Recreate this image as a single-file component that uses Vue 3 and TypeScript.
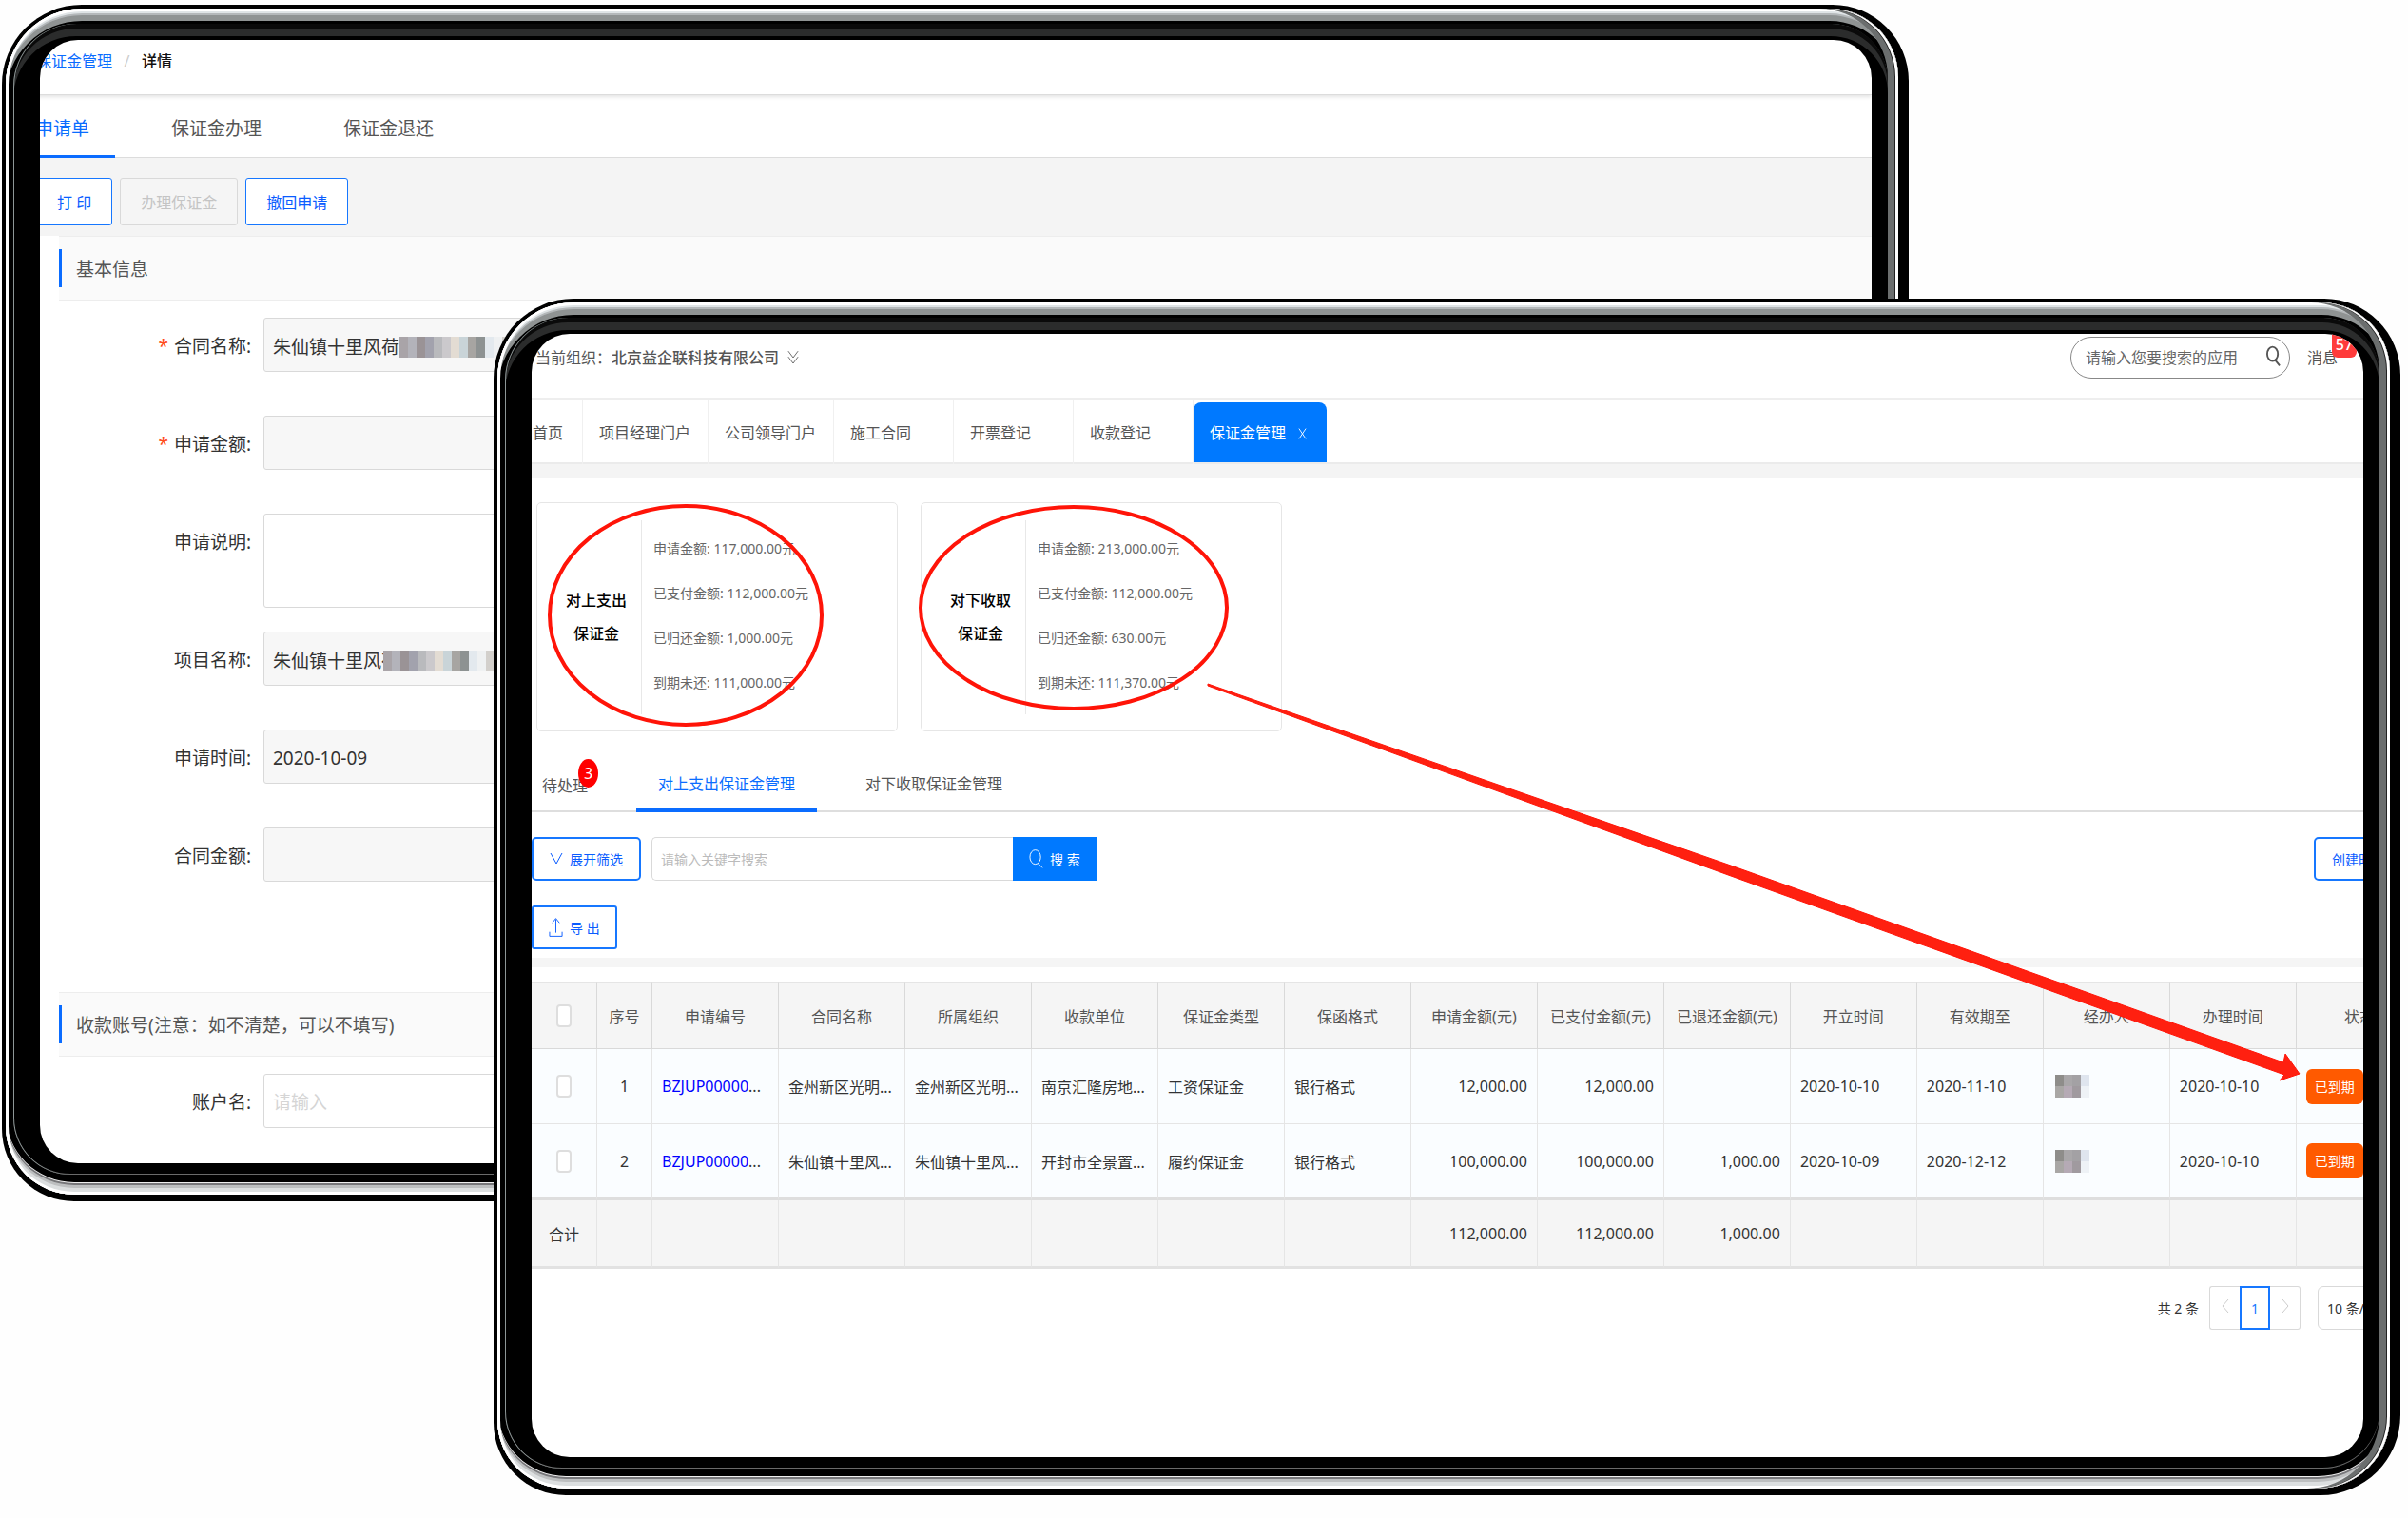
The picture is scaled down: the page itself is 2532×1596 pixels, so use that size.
<script setup lang="ts">
interface Field {
  id: string
  label: string
  value: string
  required?: boolean
  multiline?: boolean
  mask?: 'wide' | 'early'
}

interface Row {
  no: number
  code: string
  contract: string
  org: string
  payee: string
  kind: string
  format: string
  amount: string
  paid: string
  returned: string
  opened: string
  until: string
  handled: string
}

const fields: Field[] = [
  { id: 'contract-name', label: '合同名称', value: '朱仙镇十里风荷', required: true, mask: 'wide' },
  { id: 'apply-amount', label: '申请金额', value: '', required: true },
  { id: 'apply-note', label: '申请说明', value: '', multiline: true },
  { id: 'project-name', label: '项目名称', value: '朱仙镇十里风荷', mask: 'early' },
  { id: 'apply-date', label: '申请时间', value: '2020-10-09' },
  { id: 'contract-amount', label: '合同金额', value: '' },
]

const maskCells: string[] = [
  '#a9a4a8', '#b3b3ba', '#9a9396', '#a2a2ad', '#b9babd', '#cbc9cc', '#e3dcd3', '#c9d4d8',
  '#a7a5a2', '#8d9292', '#e3e9ee', '#eff1f2', '#d3d0cc', '#aab4ba',
]
const personCells: string[] = ['#8e8d8a', '#a9a7a9', '#a3a1a4', '#dfe5ee', '#a9a7a5', '#b5aab5', '#a09a9f', '#eef2f6']

const navTabs: string[] = ['项目经理门户', '公司领导门户', '施工合同', '开票登记', '收款登记']

const cards = [
  {
    title: ['对上支出', '保证金'],
    lines: ['申请金额: 117,000.00元', '已支付金额: 112,000.00元', '已归还金额: 1,000.00元', '到期未还: 111,000.00元'],
  },
  {
    title: ['对下收取', '保证金'],
    lines: ['申请金额: 213,000.00元', '已支付金额: 112,000.00元', '已归还金额: 630.00元', '到期未还: 111,370.00元'],
  },
]

const columns: string[] = [
  '申请编号', '合同名称', '所属组织', '收款单位', '保证金类型', '保函格式', '申请金额(元)',
  '已支付金额(元)', '已退还金额(元)', '开立时间', '有效期至', '经办人', '办理时间', '状态',
]

const rows: Row[] = [
  {
    no: 1, code: 'BZJUP00000', contract: '金州新区光明...', org: '金州新区光明...', payee: '南京汇隆房地...',
    kind: '工资保证金', format: '银行格式', amount: '12,000.00', paid: '12,000.00', returned: '',
    opened: '2020-10-10', until: '2020-11-10', handled: '2020-10-10',
  },
  {
    no: 2, code: 'BZJUP00000', contract: '朱仙镇十里风...', org: '朱仙镇十里风...', payee: '开封市全景置...',
    kind: '履约保证金', format: '银行格式', amount: '100,000.00', paid: '100,000.00', returned: '1,000.00',
    opened: '2020-10-09', until: '2020-12-12', handled: '2020-10-10',
  },
]
</script>

<template>
  <main class="stage">
    <section class="device back">
      <div class="screen">
        <nav class="crumbs">
          <a href="#">保证金管理</a><span class="slash">/</span><strong>详情</strong>
        </nav>
        <div class="form-tabs">
          <button type="button" class="on">申请单</button>
          <button type="button">保证金办理</button>
          <button type="button">保证金退还</button>
        </div>
        <div class="toolbar">
          <button type="button" class="line-btn">打 印</button>
          <button type="button" class="line-btn" disabled>办理保证金</button>
          <button type="button" class="line-btn">撤回申请</button>
        </div>
        <h2 class="group-title">基本信息</h2>
        <form class="fields">
          <div v-for="f in fields" :key="f.id" class="field" :class="{ multi: f.multiline }">
            <label :for="f.id"><i v-if="f.required">*</i>{{ f.label }}:</label>
            <textarea v-if="f.multiline" :id="f.id"></textarea>
            <div v-else class="box">
              <input :id="f.id" type="text" :value="f.value" readonly>
              <span v-if="f.mask" class="mask" :class="f.mask">
                <b v-for="(c, i) in maskCells" :key="i" :style="{ background: c }"></b>
              </span>
            </div>
          </div>
        </form>
        <h2 class="group-title second">收款账号(注意：如不清楚，可以不填写)</h2>
        <form class="fields">
          <div class="field">
            <label for="account">账户名:</label>
            <div class="box"><input id="account" class="open" type="text" placeholder="请输入"></div>
          </div>
        </form>
      </div>
    </section>

    <section class="device front">
      <div class="screen">
        <div class="workspace">
          <header class="top">
            <p>当前组织：<strong>北京益企联科技有限公司</strong></p>
            <svg class="more" viewBox="0 0 14 18" aria-hidden="true"><path d="M1 1l6 8 6-8M1 8l6 8 6-8" /></svg>
            <div class="app-search">
              <input type="text" aria-label="搜索应用" placeholder="请输入您要搜索的应用">
              <svg viewBox="0 0 16 22" aria-hidden="true"><ellipse cx="7" cy="9" rx="6" ry="8" /><path d="M10 16l5 6" /></svg>
            </div>
            <a href="#" class="msg">消息<span>57</span></a>
          </header>

          <nav class="nav-tabs">
            <a href="#" class="home">首页</a>
            <a v-for="t in navTabs" :key="t" href="#">{{ t }}</a>
            <a href="#" class="active">保证金管理
              <svg viewBox="0 0 10 14" aria-hidden="true"><path d="M1 1l8 12M9 1L1 13" /></svg>
            </a>
          </nav>

          <div class="cards">
            <article v-for="c in cards" :key="c.title[0]" class="card">
              <h3><span v-for="t in c.title" :key="t">{{ t }}</span></h3>
              <ul>
                <li v-for="l in c.lines" :key="l">{{ l }}</li>
              </ul>
            </article>
          </div>

          <div class="sub-tabs">
            <button type="button" class="todo">待处理<span>3</span></button>
            <button type="button" class="on">对上支出保证金管理</button>
            <button type="button">对下收取保证金管理</button>
          </div>

          <div class="filters">
            <button type="button" class="act">
              <svg viewBox="0 0 14 14" aria-hidden="true"><path d="M1 1l6 11 6-11" /></svg>展开筛选
            </button>
            <input type="text" aria-label="关键字" placeholder="请输入关键字搜索">
            <button type="button" class="find">
              <svg viewBox="0 0 16 22" aria-hidden="true"><ellipse cx="7" cy="9" rx="6" ry="8" /><path d="M10 16l5 5" /></svg>搜 索
            </button>
            <button type="button" class="act sort">创建时间</button>
          </div>
          <div class="export">
            <button type="button" class="act">
              <svg viewBox="0 0 16 22" aria-hidden="true"><path d="M8 17V2M4 6l4-5 4 5M1 16v5h14v-5" /></svg>导 出
            </button>
          </div>

          <table>
            <colgroup>
              <col class="c-check"><col class="c-no"><col v-for="c in columns" :key="c">
            </colgroup>
            <thead>
              <tr>
                <th><input type="checkbox" aria-label="全选"></th>
                <th>序号</th>
                <th v-for="c in columns" :key="c">{{ c }}</th>
              </tr>
            </thead>
            <tbody>
              <tr v-for="r in rows" :key="r.no">
                <td class="mid"><input type="checkbox" :aria-label="'选择' + r.no"></td>
                <td class="mid">{{ r.no }}</td>
                <td><a href="#">{{ r.code }}</a>...</td>
                <td>{{ r.contract }}</td>
                <td>{{ r.org }}</td>
                <td>{{ r.payee }}</td>
                <td>{{ r.kind }}</td>
                <td>{{ r.format }}</td>
                <td class="num">{{ r.amount }}</td>
                <td class="num">{{ r.paid }}</td>
                <td class="num">{{ r.returned }}</td>
                <td>{{ r.opened }}</td>
                <td>{{ r.until }}</td>
                <td><span class="person"><b v-for="(c, i) in personCells" :key="i" :style="{ background: c }"></b></span></td>
                <td>{{ r.handled }}</td>
                <td><span class="tag">已到期</span></td>
              </tr>
            </tbody>
            <tfoot>
              <tr>
                <td class="mid">合计</td>
                <td v-for="n in 7" :key="n"></td>
                <td class="num">112,000.00</td>
                <td class="num">112,000.00</td>
                <td class="num">1,000.00</td>
                <td v-for="n in 5" :key="n"></td>
              </tr>
            </tfoot>
          </table>

          <div class="pager">
            <span>共 2 条</span>
            <div class="pages">
              <button type="button" aria-label="上一页"><svg viewBox="0 0 8 16"><path d="M7 1L1 8l6 7" /></svg></button>
              <button type="button" class="current">1</button>
              <button type="button" aria-label="下一页"><svg viewBox="0 0 8 16"><path d="M1 1l6 7-6 7" /></svg></button>
            </div>
            <select aria-label="每页条数"><option>10 条/页</option></select>
          </div>
        </div>

        <svg class="marks" aria-hidden="true">
          <ellipse cx="162" cy="296" rx="143" ry="115" />
          <ellipse cx="570" cy="288" rx="161" ry="106" />
          <polygon points="711,368 1261,559 1842,766 1844,757 1859,778 1838,785 1843,779 1261,570 711,370" />
        </svg>
      </div>
    </section>
  </main>
</template>

<style>
body {
  margin: 0;
  background: #fefefe;
}
</style>

<style scoped>
* {
  box-sizing: border-box;
}

.stage {
  display: grid;
  padding: 5px 8px 20px 2px;
  font-family: "Noto Sans", "Noto Sans CJK SC", sans-serif;
  font-size: 16px;
  color: #333;
  overflow: hidden;
}

button,
input,
select,
textarea {
  font: inherit;
  color: inherit;
  margin: 0;
}

button {
  background: none;
  border: 0;
  padding: 0;
  white-space: nowrap;
}

a {
  color: inherit;
  text-decoration: none;
}

svg {
  fill: none;
  stroke: currentColor;
}

/* tablet shells */
.device {
  grid-area: 1 / 1;
  position: relative;
  isolation: isolate;
  align-self: start;
  display: flex;
  width: 79.5%;
  aspect-ratio: 2005 / 1258;
  padding: 37px 39px 40px 40px;
  border-radius: 84px 80px 84px 76px;
  background: #000;
}

.front {
  justify-self: end;
  margin-top: 309px;
}

.device::before,
.device::after {
  content: "";
  position: absolute;
}

.device::before {
  inset: 4px 11px 7px 4px;
  border-radius: 80px 72px 76px 72px;
  background: #000;
  box-shadow:
    inset 3px 0 0 #fff,
    inset -3px 0 0 #fff,
    inset -4px 0 0 #222,
    inset -11px 0 0 #6b6e6e,
    inset 0 3px 0 #fff,
    inset 0 5px 0 #dfe4e6,
    inset 0 7px 0 #b4b8ba,
    inset 0 13px 0 #8f9393,
    inset 0 -3px 0 #fff,
    inset 0 -7px 0 #dcdfe0,
    inset 0 -10px 0 #bdbfc0,
    inset 0 -12px 0 #77777a,
    inset 0 -13px 0 #eee;
}

.device::after {
  inset: 20px 22px 28px 12px;
  border-radius: 66px 60px 60px 60px;
  background: #000;
  box-shadow:
    inset 1px 0 0 #8d9696,
    inset 0 -1px 0 #6a6a6a,
    inset 0 5px 0 #0a0a0a,
    inset 0 13px 0 #2b2c2c;
}

.screen {
  position: relative;
  z-index: 1;
  flex: 1;
  min-width: 0;
  overflow: hidden;
  border-radius: 40px;
  background: #fff;
}

/* application form */
.crumbs {
  display: flex;
  height: 58px;
  padding-top: 11px;
  margin-left: -4px;
  line-height: 22px;
  border-bottom: 1px solid #dcdcdc;
  box-shadow: 0 2px 4px #e4e4e4;
}

.crumbs a,
.form-tabs .on {
  color: #0a6cff;
}

.crumbs .slash {
  width: 31px;
  text-align: center;
  color: #ccc;
}

.crumbs strong {
  font-weight: 500;
  color: #111;
}

.form-tabs {
  display: flex;
  gap: 32px;
  height: 66px;
  border-bottom: 1px solid #dcdcdc;
}

.form-tabs button {
  height: 66px;
  padding: 1px 27px 0;
  font-size: 19px;
  color: #555;
}

.form-tabs button:first-child {
  margin-left: -32px;
}

.form-tabs .on {
  padding-top: 4px;
  border-bottom: 3px solid #0a6cff;
}

.toolbar {
  display: flex;
  gap: 8px;
  height: 82px;
  padding-top: 21px;
  background: #f4f4f4;
}

.line-btn {
  height: 50px;
  padding: 0 21px;
  border: 1px solid #1677ff;
  border-radius: 3px;
  background: #fff;
  color: #0a5cff;
}

.line-btn:first-child {
  margin-left: -4px;
}

.line-btn:disabled {
  background: #f5f5f5;
  border-color: #d9d9d9;
  color: #c4c4c4;
}

.group-title {
  display: flex;
  align-items: center;
  height: 68px;
  margin: 0 0 18px 20px;
  border: solid #ededed;
  border-width: 1px 0;
  background: #fafafa;
  font-size: 19px;
  font-weight: 400;
  color: #555;
}

.group-title::before {
  content: "";
  width: 3px;
  height: 40px;
  margin-right: 15px;
  background: #0a6cff;
}

.second {
  margin-top: 116px;
}

.fields {
  display: flex;
  flex-direction: column;
  gap: 46px;
  font-size: 19px;
}

.field {
  display: flex;
  gap: 13px;
}

.field label {
  width: 222px;
  line-height: 60px;
  height: 57px;
  text-align: right;
}

.field i {
  margin-right: 6px;
  font-style: normal;
  color: #ff4a1c;
}

.box {
  position: relative;
  width: 640px;
}

.box input,
.field textarea {
  width: 100%;
  height: 57px;
  padding: 2px 9px 0;
  border: 1px solid #d9d9d9;
  border-radius: 3px;
  background: #f7f7f7;
  outline: 0;
}

.field textarea {
  display: block;
  width: 640px;
  height: 99px;
  background: #fff;
  resize: none;
}

.multi {
  margin-bottom: -21px;
}

.box .open {
  background: #fff;
}

.box .open::placeholder {
  color: #d5d5d5;
  opacity: 1;
}

.mask {
  position: absolute;
  top: 20px;
  left: 143px;
  display: flex;
  height: 22px;
}

.early {
  left: 126px;
}

.mask b {
  width: 9px;
}

/* deposit workspace */
.workspace {
  margin-right: -63px;
}

.top {
  display: flex;
  height: 70px;
  padding: 3px 90px 0 4px;
  border-bottom: 3px solid #eee;
  line-height: 44px;
  color: #555;
}

.top p {
  margin: 0;
}

.top strong {
  font-weight: 500;
}

.more {
  width: 12px;
  height: 18px;
  margin: 13px 0 0 9px;
}

.app-search {
  display: flex;
  align-items: center;
  width: 231px;
  height: 44px;
  margin-left: auto;
  padding: 0 9px 0 15px;
  border: 1px solid #888;
  border-radius: 22px;
}

.app-search input {
  flex: 1;
  min-width: 0;
  padding: 0;
  border: 0;
  outline: 0;
  background: none;
}

.app-search input::placeholder {
  color: #666;
  opacity: 1;
}

.app-search svg {
  width: 15px;
  height: 22px;
  margin-top: -4px;
  stroke-width: 2;
}

.msg {
  position: relative;
  margin-left: 18px;
}

.msg span {
  position: absolute;
  top: -8px;
  left: 26px;
  width: 26px;
  height: 30px;
  border-radius: 6px;
  background: #ff3b3b;
  color: #fff;
  font-weight: 500;
  line-height: 32px;
  text-align: center;
}

.nav-tabs {
  display: flex;
  height: 82px;
  border-bottom: 15px solid #f4f4f4;
  box-shadow: inset 0 -2px 0 #ebebeb;
  line-height: 68px;
  color: #555;
}

.nav-tabs a {
  min-width: 126px;
  padding: 0 18px 0 17px;
  border-right: 1px solid #f0f0f0;
}

.nav-tabs .home {
  min-width: 0;
  padding: 0 20px 0 1px;
}

.nav-tabs .active {
  width: 140px;
  height: 63px;
  margin-top: 2px;
  border: 0;
  border-radius: 8px 8px 0 0;
  background: #0079ff;
  color: #fff;
  line-height: 64px;
  white-space: nowrap;
}

.nav-tabs svg {
  width: 9px;
  height: 14px;
  margin-left: 9px;
  vertical-align: -2px;
}

.cards {
  display: flex;
  gap: 24px;
  padding: 25px 5px 0;
}

.card {
  display: flex;
  align-items: center;
  width: 380px;
  height: 241px;
  border: 1px solid #e6e6e6;
  border-radius: 5px;
}

.card h3 {
  display: flex;
  flex-direction: column;
  justify-content: center;
  width: 110px;
  height: 204px;
  margin: 0;
  padding-left: 15px;
  border-right: 1px solid #e8e8e8;
  font-size: 16px;
  font-weight: 500;
  line-height: 35px;
  text-align: center;
  color: #000;
}

.card ul {
  margin: 0;
  padding: 0 0 4px 12px;
  list-style: none;
  font-size: 14px;
  line-height: 47px;
  color: #666;
}

.sub-tabs {
  display: flex;
  gap: 28px;
  height: 56px;
  margin-top: 29px;
  border-bottom: 2px solid #dedede;
}

.sub-tabs button {
  position: relative;
  height: 56px;
  padding: 0 23px 6px;
  color: #555;
}

.sub-tabs .todo {
  padding: 0 23px 2px 11px;
}

.sub-tabs .todo span {
  position: absolute;
  top: 0;
  left: 49px;
  width: 21px;
  height: 30px;
  border-radius: 50%;
  background: #f00;
  color: #fff;
  line-height: 30px;
}

.sub-tabs .on {
  color: #0a6cff;
  box-shadow: inset 0 -4px 0 #0a6cff;
}

.filters {
  display: flex;
  margin-top: 26px;
  font-size: 14px;
}

.act,
.find {
  display: flex;
  align-items: center;
  gap: 7px;
  height: 46px;
  padding: 0 17px;
  border: 2px solid #1677ff;
  border-radius: 5px;
  color: #0a5cff;
}

.act svg {
  width: 14px;
  height: 14px;
}

.filters input {
  width: 380px;
  height: 46px;
  margin-left: 11px;
  padding: 0 9px;
  border: 1px solid #d9d9d9;
  border-right: 0;
  border-radius: 5px 0 0 5px;
  outline: 0;
}

.filters input::placeholder {
  color: #bbb;
  opacity: 1;
}

.find {
  width: 89px;
  border: 0;
  border-radius: 0;
  background: #0079ff;
  color: #fff;
}

.find svg,
.export svg {
  width: 15px;
  height: 22px;
}

.sort {
  width: 115px;
  margin-left: auto;
}

.export {
  height: 91px;
  padding-top: 26px;
  border-bottom: 10px solid #f5f5f5;
  font-size: 14px;
}

.export .act {
  padding: 0 16px;
  border-radius: 3px;
}

table {
  width: 100%;
  margin-top: 15px;
  table-layout: fixed;
  border-collapse: separate;
  border-spacing: 0;
  white-space: nowrap;
}

.c-check {
  width: 69px;
}

.c-no {
  width: 58px;
}

th,
td {
  height: 79px;
  padding: 0 10px;
  border: solid #e5e5e5;
  border-width: 0 1px 1px 0;
  background: #fafdff;
  text-align: left;
}

th {
  height: 71px;
  padding: 0;
  border-color: #d9d9d9;
  border-top: 1px solid #e5e5e5;
  background: #f5f5f5;
  color: #555;
  font-weight: 400;
  text-align: center;
}

tbody tr:last-child td {
  height: 80px;
  border-bottom: 3px solid #dedede;
}

tfoot td {
  height: 72px;
  border-bottom: 3px solid #e2e2e2;
  background: #f5f5f5;
}

td a {
  color: #00f;
}

td.mid {
  padding: 0;
  text-align: center;
}

td.num {
  text-align: right;
}

table input {
  appearance: none;
  width: 16px;
  height: 24px;
  border: 2px solid #dedede;
  border-radius: 4px;
  background: #fff;
  vertical-align: middle;
}

.person {
  display: grid;
  grid-template-columns: repeat(4, 9px);
  grid-auto-rows: 12px;
  padding-left: 2px;
}

.tag {
  display: inline-block;
  height: 37px;
  padding: 0 9px;
  border-radius: 6px;
  background: #ff5a00;
  color: #fff;
  font-size: 14px;
  line-height: 37px;
}

.pager {
  display: flex;
  justify-content: flex-end;
  align-items: center;
  margin-top: 18px;
  font-size: 14px;
}

.pages {
  display: flex;
  margin: 0 18px 0 11px;
}

.pages button {
  width: 32px;
  height: 46px;
  border: 1px solid #d9d9d9;
  color: #ccc;
}

.pages button:first-child {
  border-right: 0;
  border-radius: 3px 0 0 3px;
}

.pages button:last-child {
  border-left: 0;
  border-radius: 0 3px 3px 0;
}

.pages .current {
  border: 2px solid #1677ff;
  color: #1677ff;
}

.pages svg {
  width: 8px;
  height: 16px;
}

.pager select {
  appearance: none;
  width: 111px;
  height: 46px;
  padding: 0 9px;
  border: 1px solid #d9d9d9;
  border-radius: 6px;
  background: #fff;
}

/* hand-drawn marks over the page */
.marks {
  position: absolute;
  inset: 0;
  width: 100%;
  height: 100%;
  pointer-events: none;
  stroke: #ff1408;
  stroke-width: 4;
}

.marks polygon {
  fill: #ff2010;
  stroke-width: 1;
}
</style>
